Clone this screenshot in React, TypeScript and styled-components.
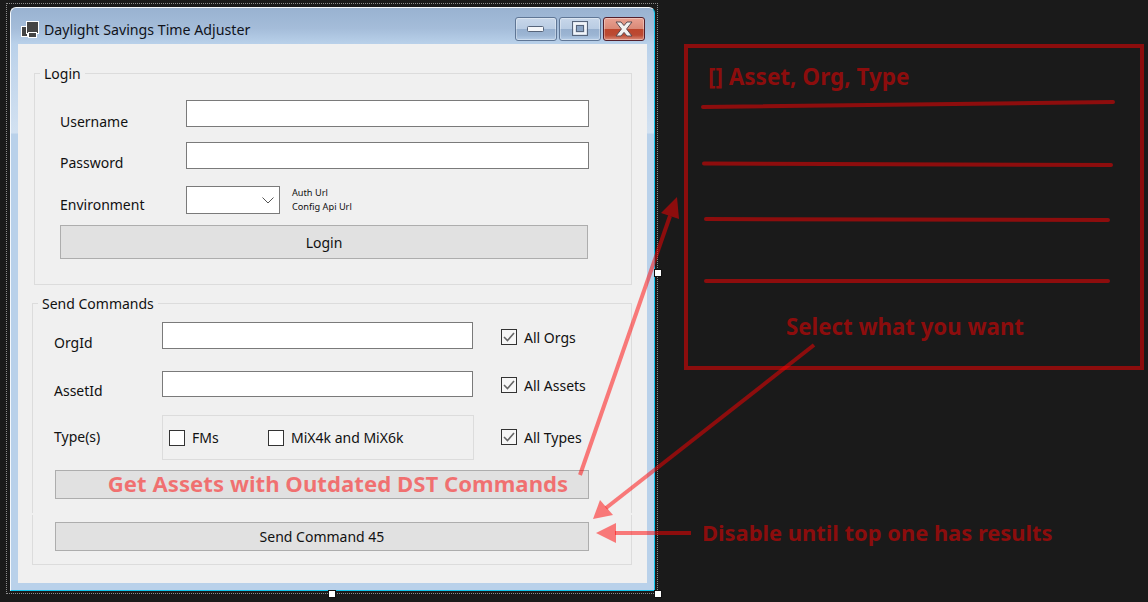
import styled, { createGlobalStyle } from 'styled-components';

const UI_FONT = `'Noto Sans', 'Open Sans', sans-serif`;
const NOTE_RED = 'rgba(255, 0, 0, 0.5)';

const GlobalStyle = createGlobalStyle`
html, body {
  margin: 0;
  padding: 0;
  height: 602px;
  overflow: hidden;
  background: #1a1a1a;
}
`

const Page = styled.div`
position: relative;
width: 1148px;
height: 602px;
padding: 7px 0 0 10px;
box-sizing: border-box;
font-family: ${UI_FONT};
font-size: 14px;
color: #111;
`
const WindowFrame = styled.div`
width: 645px;
height: 584px;
box-sizing: border-box;
border-top: 1px solid #f4f8fc;
border-left: 1px solid #f4f8fc;
border-right: 1px solid #12c6ee;
border-bottom: 1px solid #12c6ee;
border-radius: 6px 6px 0 0;
background: linear-gradient(#99b2d1 0, #a4bcd9 20px, #b9d1ea 36px, #c2d6ec 60px, #d2e1f1 125px, #b9d1ea 126px);
display: flex;
flex-direction: column;
`
const TitleBar = styled.div`
display: flex;
align-items: center;
height: 36px;
box-sizing: border-box;
padding: 9px 9px 3px 10px;
`
const AppTitle = styled.span`
margin-left: 5px;
font-size: 14.2px;
color: #10131a;
flex: 1;
`
const WindowButtons = styled.div`
display: flex;
gap: 2px;
`
const CaptionButton = styled.div<{ $close?: boolean }>`
width: 42px;
height: 24px;
box-sizing: border-box;
display: flex;
align-items: center;
justify-content: center;
border-radius: 3px;
border: 1px solid ${p => (p.$close ? '#54202c' : '#5f7695')};
box-shadow: inset 0 0 0 1px rgba(255, 255, 255, 0.35);
background: ${p => p.$close
    ? 'linear-gradient(#e9a192 0, #d98a78 48%, #bd452c 50%, #bb4a33 78%, #dc8c7a 100%)'
    : 'linear-gradient(#c8d7ea 0, #b9cce3 48%, #96afce 50%, #9cb5d3 78%, #b5cce6 100%)'};
`
const ClientArea = styled.div`
flex: 1;
margin: 0 7px 7px 7px;
background: #f0f0f0;
padding: 20px 15px 0 14px;
display: flex;
flex-direction: column;
`
const GroupBox = styled.fieldset<{ $inset: number; $top?: number; $height: number; $open?: 'top' | 'bottom' }>`
margin: ${p => p.$top ?? 0}px 0 0 ${p => p.$inset}px;
padding: 0;
min-width: 0;
box-sizing: border-box;
height: ${p => p.$height}px;
border: 1px solid #dcdcdc;
${p => (p.$open === 'top' ? 'border-top: 0;' : '')}
${p => (p.$open === 'bottom' ? 'border-bottom: 0;' : '')}
`
const GroupLegend = styled.legend`
margin-left: 5px;
padding: 0 4px;
font-size: 14px;
line-height: 19px;
`
const LoginBody = styled.div`
padding: 17px 0 0 25px;
display: flex;
flex-direction: column;
`
const CommandsBody = styled.div`
padding: 9px 0 0 21px;
display: flex;
flex-direction: column;
`
const FieldRow = styled.div<{ $height: number; $gap: number }>`
display: flex;
align-items: flex-start;
height: ${p => p.$height}px;
margin-bottom: ${p => p.$gap}px;
`
const FieldLabel = styled.div<{ $width: number; $drop: number }>`
width: ${p => p.$width}px;
height: 20px;
line-height: 20px;
margin-top: ${p => p.$drop}px;
white-space: nowrap;
`
const TextBox = styled.div<{ $width: number; $height?: number }>`
width: ${p => p.$width}px;
height: ${p => p.$height ?? 27}px;
box-sizing: border-box;
background: #fff;
border: 1px solid #7a7a7a;
`
const ComboBox = styled(TextBox)`
display: flex;
align-items: center;
justify-content: flex-end;
padding-right: 4px;
`
const UrlList = styled.div`
margin-left: 12px;
font-size: 9.2px;
line-height: 14px;
white-space: nowrap;
`
const FormButton = styled.div<{ $width: number; $height: number; $indent?: number; $note?: boolean }>`
width: ${p => p.$width}px;
height: ${p => p.$height}px;
box-sizing: border-box;
margin-left: ${p => p.$indent ?? 0}px;
display: flex;
align-items: center;
justify-content: center;
background: #e1e1e1;
border: 1px solid #adadad;
white-space: nowrap;
${p => p.$note ? `
  padding-left: 32px;
  padding-bottom: 2px;
  color: ${NOTE_RED};
  font-size: 22.2px;
  font-weight: 700;
` : ''}
`
const CheckItem = styled.div<{ $drop?: number; $width?: number }>`
display: flex;
align-items: center;
gap: 7px;
height: 20px;
margin-top: ${p => p.$drop ?? 0}px;
${p => (p.$width ? `width: ${p.$width}px;` : '')}
white-space: nowrap;
`
const CheckSquare = styled.div<{ $checked?: boolean }>`
width: 16px;
height: 16px;
box-sizing: border-box;
border: 1px solid #333;
background: ${p => (p.$checked ? '#f6f6f6' : '#fff')};
display: flex;
align-items: center;
justify-content: center;
`
const SideCheck = styled.div<{ $left?: number }>`
margin-left: ${p => p.$left ?? 28}px;
`
const TypeBox = styled.div`
width: 312px;
height: 45px;
box-sizing: border-box;
border: 1px solid #dcdcdc;
padding: 0 0 0 6px;
display: flex;
align-items: center;
`
const LastGroupBody = styled.div`
padding: 7px 0 0 22px;
`

// everything below sits on top of the form: designer chrome + red scribbles
const SelectionOutline = styled.div`
position: absolute;
left: 6px;
top: 3px;
width: 652px;
height: 591px;
box-sizing: border-box;
border: 1px dotted #8c8c8c;
pointer-events: none;
`
const Handle = styled.div<{ $x: number; $y: number }>`
position: absolute;
left: ${p => p.$x - 4}px;
top: ${p => p.$y - 4}px;
width: 8px;
height: 8px;
box-sizing: border-box;
background: #fff;
border: 1px solid #111;
`
const SketchBox = styled.div`
position: absolute;
left: 684px;
top: 44px;
width: 460px;
height: 326px;
box-sizing: border-box;
border: 4px solid #8c0d0d;
`
const SketchText = styled.div<{ $x: number; $y: number; $size: number }>`
position: absolute;
left: ${p => p.$x}px;
top: ${p => p.$y}px;
line-height: 32px;
font-size: ${p => p.$size}px;
font-weight: 700;
color: #8c0d0d;
white-space: nowrap;
`
const ScribbleLayer = styled.svg`
position: absolute;
left: 0;
top: 0;
pointer-events: none;
`

const Chevron = () => (
    <svg width="14" height="8" viewBox="0 0 14 8">
        <path d="M1.5 1.5 L7 7 L12.5 1.5" fill="none" stroke="#555" strokeWidth="1" />
    </svg>
)

const CheckMark = () => (
    <svg width="12" height="10" viewBox="0 0 12 10">
        <path d="M1 5 L4.5 8.5 L11 1" fill="none" stroke="#666" strokeWidth="1.6" />
    </svg>
)

const AppIcon = () => (
    <svg width="18" height="17" viewBox="0 0 18 17">
        <rect x="0.5" y="5.5" width="6" height="10" fill="#444" stroke="#fff" />
        <rect x="5.5" y="0.5" width="12" height="12" fill="#444" stroke="#fff" />
        <rect x="7.5" y="11.5" width="8" height="5" fill="#444" stroke="#fff" />
    </svg>
)

const MinimizeGlyph = () => (
    <svg width="18" height="8" viewBox="0 0 18 8">
        <rect x="0.5" y="1.5" width="16" height="5" rx="1" fill="#f4f6f9" stroke="#56647a" />
    </svg>
)

const MaximizeGlyph = () => (
    <svg width="18" height="16" viewBox="0 0 18 16">
        <rect x="1.5" y="0.5" width="15" height="14" fill="none" stroke="#56647a" />
        <rect x="3.5" y="2.5" width="11" height="10" fill="none" stroke="#f2f4f7" strokeWidth="2.4" />
        <rect x="5.5" y="4.5" width="7" height="6" fill="#8ba4c4" stroke="#56647a" />
    </svg>
)

const CloseGlyph = () => (
    <svg width="20" height="16" viewBox="0 0 20 16">
        <path d="M2 1 H7 L10 4.6 L13 1 H18 L12.6 8 L18 15 H13 L10 11.4 L7 15 H2 L7.4 8 Z" fill="#f1f1f1" stroke="#5b4a50" />
    </svg>
)

const Scribbles = () => (
    <ScribbleLayer width="1148" height="602" viewBox="0 0 1148 602">
        <g stroke={NOTE_RED} strokeWidth="4" strokeLinecap="round" fill="none">
            <path d="M703 107 L1113 102" />
            <path d="M704 163.5 L1111 165" />
            <path d="M706 219 L1108 220" />
            <path d="M706 281 L1108 281" />
        </g>
        <g stroke={NOTE_RED} strokeWidth="4" fill="none">
            <path d="M580 475 L670 216" />
            <path d="M814 345 L606 508" />
            <path d="M691 533 L615 533" />
        </g>
        <g fill={NOTE_RED}>
            <polygon points="677,197 661,213 679,219" />
            <polygon points="593,519 600,500 613,515" />
            <polygon points="596,533 616,523 616,543" />
        </g>
    </ScribbleLayer>
)

const App = () => {
    return (
        <Page>
            <GlobalStyle />
            <WindowFrame>
                <TitleBar>
                    <AppIcon />
                    <AppTitle>Daylight Savings Time Adjuster</AppTitle>
                    <WindowButtons>
                        <CaptionButton><MinimizeGlyph /></CaptionButton>
                        <CaptionButton><MaximizeGlyph /></CaptionButton>
                        <CaptionButton $close><CloseGlyph /></CaptionButton>
                    </WindowButtons>
                </TitleBar>
                <ClientArea>
                    <GroupBox $inset={2} $height={221}>
                        <GroupLegend>Login</GroupLegend>
                        <LoginBody>
                            <FieldRow $height={27} $gap={15}>
                                <FieldLabel $width={126} $drop={12}>Username</FieldLabel>
                                <TextBox $width={403} />
                            </FieldRow>
                            <FieldRow $height={27} $gap={17}>
                                <FieldLabel $width={126} $drop={11}>Password</FieldLabel>
                                <TextBox $width={403} />
                            </FieldRow>
                            <FieldRow $height={28} $gap={11}>
                                <FieldLabel $width={126} $drop={9}>Environment</FieldLabel>
                                <ComboBox $width={94} $height={28}><Chevron /></ComboBox>
                                <UrlList>
                                    <div>Auth Url</div>
                                    <div>Config Api Url</div>
                                </UrlList>
                            </FieldRow>
                            <FormButton $width={528} $height={34}>Login</FormButton>
                        </LoginBody>
                    </GroupBox>
                    <GroupBox $inset={0} $top={9} $height={219} $open="bottom">
                        <GroupLegend>Send Commands</GroupLegend>
                        <CommandsBody>
                            <FieldRow $height={27} $gap={22}>
                                <FieldLabel $width={108} $drop={11}>OrgId</FieldLabel>
                                <TextBox $width={311} />
                                <SideCheck>
                                    <CheckItem $drop={5}>
                                        <CheckSquare $checked><CheckMark /></CheckSquare>All Orgs
                                    </CheckItem>
                                </SideCheck>
                            </FieldRow>
                            <FieldRow $height={26} $gap={18}>
                                <FieldLabel $width={108} $drop={10}>AssetId</FieldLabel>
                                <TextBox $width={311} $height={26} />
                                <SideCheck>
                                    <CheckItem $drop={4}>
                                        <CheckSquare $checked><CheckMark /></CheckSquare>All Assets
                                    </CheckItem>
                                </SideCheck>
                            </FieldRow>
                            <FieldRow $height={45} $gap={10}>
                                <FieldLabel $width={108} $drop={12}>Type(s)</FieldLabel>
                                <TypeBox>
                                    <CheckItem $width={99}><CheckSquare />FMs</CheckItem>
                                    <CheckItem><CheckSquare />MiX4k and MiX6k</CheckItem>
                                </TypeBox>
                                <SideCheck $left={27}>
                                    <CheckItem $drop={12}>
                                        <CheckSquare $checked><CheckMark /></CheckSquare>All Types
                                    </CheckItem>
                                </SideCheck>
                            </FieldRow>
                            <FormButton $width={534} $height={29} $indent={1} $note>
                                Get Assets with Outdated DST Commands
                            </FormButton>
                        </CommandsBody>
                    </GroupBox>
                    <GroupBox $inset={0} $top={2} $height={50} $open="top">
                        <LastGroupBody>
                            <FormButton $width={534} $height={29}>Send Command 45</FormButton>
                        </LastGroupBody>
                    </GroupBox>
                </ClientArea>
            </WindowFrame>

            <SelectionOutline />
            <Handle $x={658} $y={273} />
            <Handle $x={332} $y={594} />
            <Handle $x={658} $y={594} />

            <SketchBox />
            <SketchText $x={708} $y={61} $size={22.5}>[] Asset, Org, Type</SketchText>
            <SketchText $x={786} $y={311} $size={22.25}>Select what you want</SketchText>
            <SketchText $x={702} $y={517} $size={21.9}>Disable until top one has results</SketchText>
            <Scribbles />
        </Page>
    )
}

export default App
